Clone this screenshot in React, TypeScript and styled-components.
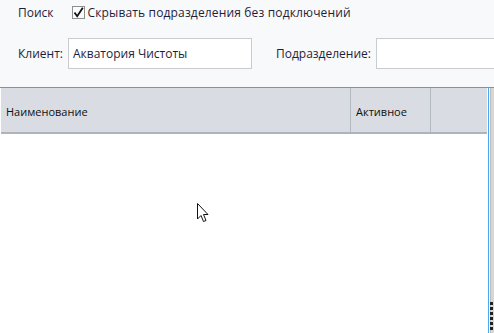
import React from "react";
import styled, { createGlobalStyle } from "styled-components";

const GlobalStyle = createGlobalStyle`
  html, body {
    margin: 0;
    padding: 0;
    background: #ffffff;
  }
  body {
    font-family: "Open Sans", "Noto Sans", "DejaVu Sans", sans-serif;
    overflow: hidden;
  }
`;

function App() {
    return (
        <Page>
            <GlobalStyle />
            <FilterPanel>
                <SearchRow>
                    <Label>Поиск</Label>
                    <CheckLabel>
                        <CheckBox>
                            <svg width="11" height="11" viewBox="0 0 11 11">
                                <path d="M1.5 5.5 L4.2 9.2 L9.8 0.8" fill="none" stroke="#111" strokeWidth="1.8" />
                            </svg>
                        </CheckBox>
                        Скрывать подразделения без подключений
                    </CheckLabel>
                </SearchRow>
                <FieldRow>
                    <Label>Клиент:</Label>
                    <TextInput width={184} defaultValue="Акватория Чистоты" />
                    <Label>Подразделение:</Label>
                    <TextInput width={140} defaultValue="" />
                </FieldRow>
            </FilterPanel>
            <GridArea>
                <Grid>
                    <HeaderRow>
                        <HeaderCell width={350}>Наименование</HeaderCell>
                        <HeaderCell width={80}>Активное</HeaderCell>
                        <HeaderCell width={56} last />
                    </HeaderRow>
                    <GridBody>
                        <Cursor width="12" height="20" viewBox="0 0 12 20">
                            <path
                                d="M0.5 0.5 L0.5 16 L4 12.5 L6.5 18.5 L9 17.5 L6.5 11.5 L11 11.5 Z"
                                fill="#ffffff"
                                stroke="#111111"
                                strokeWidth="1"
                            />
                        </Cursor>
                    </GridBody>
                </Grid>
                <ScrollStrip>
                    <Grip>
                        {[0, 1, 2, 3, 4, 5].map((i) => (
                            <GripDot key={i} />
                        ))}
                    </Grip>
                </ScrollStrip>
            </GridArea>
        </Page>
    );
}

const Page = styled.div`
    width: 494px;
    height: 333px;
    display: flex;
    flex-direction: column;
    overflow: hidden;
    font-size: 12px;
    color: #1e1e3c;
`;

const FilterPanel = styled.div`
    background: #f8f9fb;
    height: 87px;
    border-bottom: 1px solid #5a9bd3;
    box-sizing: content-box;
    display: flex;
    flex-direction: column;
`;

const SearchRow = styled.div`
    display: flex;
    align-items: center;
    height: 24px;
    padding: 0 0 0 18px;
    gap: 18px;
`;

const Label = styled.span`
    white-space: nowrap;
    color: #1e1e3c;
`;

const CheckLabel = styled.label`
    display: flex;
    align-items: center;
    gap: 3px;
    white-space: nowrap;
    color: #1e1e3c;
    letter-spacing: 0.15px;
`;

const CheckBox = styled.span`
    width: 11px;
    height: 11px;
    border: 1px solid #8e8f8f;
    background: #fbfbfb;
    display: flex;
    align-items: center;
    justify-content: center;
`;

const FieldRow = styled.div`
    display: flex;
    align-items: center;
    margin-top: 14px;
    padding-left: 18px;
    gap: 5px;

    & > span:nth-of-type(2) {
        margin-left: 19px;
    }
`;

const TextInput = styled.input<{ width: number }>`
    width: ${(p) => p.width}px;
    height: 31px;
    box-sizing: border-box;
    border: 1px solid #c9cbce;
    background: #ffffff;
    padding: 0 4px;
    font-family: inherit;
    font-size: 12px;
    color: #1e1e3c;
    outline: none;
    flex-shrink: 0;
`;

const GridArea = styled.div`
    flex: 1;
    display: flex;
    min-height: 0;
`;

const Grid = styled.div`
    width: 489px;
    flex-shrink: 0;
    display: flex;
    flex-direction: column;
    padding: 0 1px;
    border-right: 1px solid #4aa8ee;
    box-sizing: border-box;
    background: #ffffff;
`;

const HeaderRow = styled.div`
    display: flex;
    height: 46px;
    background: #d9dde3;
    border-bottom: 2px solid #aeb4bc;
    box-sizing: border-box;
`;

const HeaderCell = styled.div<{ width: number; last?: boolean }>`
    width: ${(p) => p.width}px;
    flex-shrink: 0;
    display: flex;
    align-items: center;
    padding: 2px 0 0 5px;
    box-sizing: border-box;
    font-size: 11px;
    color: #101010;
    border-right: 1px solid ${(p) => (p.last ? "transparent" : "#b4bac2")};
`;

const GridBody = styled.div`
    flex: 1;
    position: relative;
`;

const Cursor = styled.svg`
    position: absolute;
    left: 196px;
    top: 69px;
`;

const ScrollStrip = styled.div`
    flex: 1;
    background: #d6d6d6;
    border-left: 1px solid #ffffff;
    box-shadow: inset 1px 0 0 #bdbdbd;
    display: flex;
    flex-direction: column;
    justify-content: flex-end;
    align-items: flex-end;
    padding-bottom: 3px;
`;

const Grip = styled.div`
    display: flex;
    flex-direction: column;
    gap: 2px;
    width: 4px;
`;

const GripDot = styled.span`
    width: 3px;
    height: 3px;
    background: #222;
`;

export default App;
